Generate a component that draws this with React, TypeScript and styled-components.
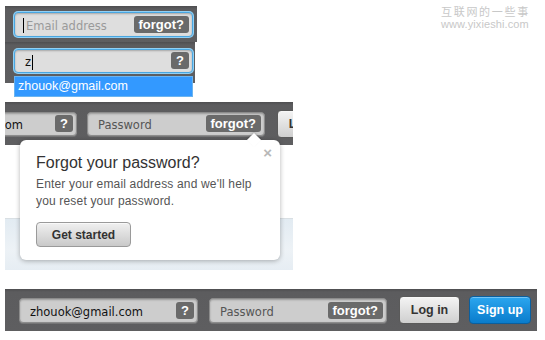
import React from 'react';
import styled, { createGlobalStyle } from 'styled-components';

const Global = createGlobalStyle`
  html, body { margin: 0; padding: 0; background: #fff; }
  body { width: 545px; height: 340px; overflow: hidden; font-family: "Liberation Sans", Arial, sans-serif; }
`;

const Canvas = styled.div`
  position: relative;
  width: 545px;
  height: 340px;
  overflow: hidden;
  background: #fff;
`;

/* each screenshot clip sits on a free canvas */
const Shot = styled.div<{ $x: number; $y: number; $w: number; $h?: number }>`
  position: absolute;
  left: ${p => p.$x}px;
  top: ${p => p.$y}px;
  width: ${p => p.$w}px;
  ${p => (p.$h ? `height: ${p.$h}px;` : '')}
  overflow: visible;
`;

const Bar = styled.div<{ $h: number; $pl: number; $gap?: number; $pt?: number }>`
  display: flex;
  align-items: center;
  box-sizing: border-box;
  height: ${p => p.$h}px;
  padding-left: ${p => p.$pl}px;
  padding-top: ${p => p.$pt ?? 0}px;
  gap: ${p => p.$gap ?? 0}px;
  overflow: hidden;
  background: linear-gradient(#4e4e50 0px, #5c5c5e 3px, #5e5e60 100%);
`;

const Field = styled.div<{ $w: number; $focus?: boolean; $h?: number; $shift?: number }>`
  flex: none;
  display: flex;
  align-items: center;
  box-sizing: border-box;
  width: ${p => p.$w}px;
  height: ${p => p.$h ?? 25}px;
  margin-left: ${p => p.$shift ?? 0}px;
  padding: 0 3px 0 10px;
  border-radius: 4px;
  background: ${p => (p.$focus ? '#dedede' : '#cdcdcd')};
  border: 1px solid ${p => (p.$focus ? '#4aa6e0' : '#8c8c8c')};
  box-shadow: ${p =>
    p.$focus
      ? '0 0 0 1px #8fd0f6, inset 0 1px 2px rgba(0,0,0,0.25)'
      : 'inset 0 1px 2px rgba(0,0,0,0.25), 0 1px 0 rgba(255,255,255,0.15)'};
`;

const FieldText = styled.span<{ $tone: 'placeholder' | 'value' | 'muted' }>`
  flex: 1;
  padding-top: 3px;
  font-family: "DejaVu Sans", Verdana, sans-serif;
  font-size: 11.5px;
  white-space: nowrap;
  color: ${p => (p.$tone === 'placeholder' ? '#9a9a9a' : p.$tone === 'muted' ? '#555' : '#111')};
  display: flex;
  align-items: center;
`;

const Caret = styled.span<{ $after?: boolean }>`
  display: inline-block;
  width: 1px;
  height: 15px;
  background: #000;
  margin: ${p => (p.$after ? '0 0 0 1px' : '0 2px 0 -2px')};
`;

const Badge = styled.span<{ $square?: boolean }>`
  flex: none;
  box-sizing: border-box;
  height: 17px;
  line-height: 17px;
  ${p => (p.$square ? 'width: 18px; text-align: center;' : 'padding: 0 5px;')}
  border-radius: 3px;
  background: #6a6a6a;
  color: #fff;
  font-family: "Liberation Sans", Arial, sans-serif;
  font-weight: bold;
  font-size: 13px;
`;

const Dropdown = styled.div`
  position: absolute;
  left: 9px;
  top: 34px;
  width: 179px;
  height: 21px;
  box-sizing: border-box;
  background: #3399ff;
  border: 1px solid #6ab4f0;
  color: #fff;
  font-family: "Liberation Sans", Arial, sans-serif;
  font-size: 12.5px;
  line-height: 19px;
  padding-left: 3px;
`;

const Button = styled.button<{ $primary?: boolean; $w: number; $ml?: number }>`
  flex: none;
  box-sizing: border-box;
  width: ${p => p.$w}px;
  height: 28px;
  margin-left: ${p => p.$ml ?? 0}px;
  border-radius: 4px;
  padding: 0;
  font-family: "Liberation Sans", Arial, sans-serif;
  font-size: 12.5px;
  font-weight: bold;
  color: ${p => (p.$primary ? '#fff' : '#333')};
  border: 1px solid ${p => (p.$primary ? '#0b5f9e' : '#5a5a5a')};
  background: ${p =>
    p.$primary
      ? 'linear-gradient(#2ba6ef, #0a7ccc)'
      : 'linear-gradient(#f4f4f4, #cfcfcf)'};
  box-shadow: inset 0 1px 0 rgba(255,255,255,0.35);
`;

const Body = styled.div`
  display: flex;
  flex-direction: column;
  height: 125px;
  background: #fff;
`;

const Spacer = styled.div`
  flex: none;
  height: 73px;
  border-bottom: 1px solid #d9dfe3;
`;

const Sky = styled.div`
  flex: 1;
  background: linear-gradient(#e2ebf2, #edf2f6 60%, #e6edf3);
`;

const Popover = styled.div`
  position: absolute;
  left: 15px;
  top: 38px;
  width: 260px;
  height: 120px;
  box-sizing: border-box;
  padding: 13px 16px 0 16px;
  background: #fff;
  border-radius: 6px;
  box-shadow: 0 1px 5px rgba(0,0,0,0.3);
  &::before {
    content: '';
    position: absolute;
    top: -5px;
    left: 229px;
    width: 10px;
    height: 10px;
    background: #fff;
    transform: rotate(45deg);
    box-shadow: -1px -1px 2px rgba(0,0,0,0.15);
  }
`;

const Close = styled.span`
  position: absolute;
  right: 8px;
  top: 4px;
  color: #b8b8b8;
  font-family: "Liberation Sans", Arial, sans-serif;
  font-size: 15px;
  font-weight: bold;
`;

const Title = styled.div`
  position: relative;
  font-size: 16px;
  color: #333;
  line-height: 20px;
`;

const Copy = styled.p`
  margin: 3px 0 0;
  font-size: 12px;
  letter-spacing: 0.17px;
  line-height: 17px;
  color: #555;
`;

const SmallButton = styled.button`
  margin-top: 12px;
  box-sizing: border-box;
  width: 95px;
  height: 25px;
  padding: 0;
  border-radius: 4px;
  border: 1px solid #9a9a9a;
  background: linear-gradient(#f0f0f0, #c9c9c9);
  box-shadow: inset 0 1px 0 rgba(255,255,255,0.6);
  font-family: "Liberation Sans", Arial, sans-serif;
  font-weight: bold;
  font-size: 12px;
  color: #333;
`;

const Watermark = styled.div`
  position: absolute;
  left: 441px;
  top: 4px;
  color: #c8c8c8;
`;

const WmCn = styled.div`
  font-family: "Noto Sans CJK SC", sans-serif;
  font-size: 11px;
  line-height: 14px;
  letter-spacing: 1.7px;
`;

const WmEn = styled.div`
  font-family: "Liberation Sans", Arial, sans-serif;
  font-size: 11px;
  line-height: 12px;
  letter-spacing: 0.1px;
`;

export default function App() {
  return (
    <Canvas>
      <Global />

      <Shot $x={5} $y={6} $w={192}>
        <Bar $h={36} $pl={9}>
          <Field $w={179} $focus>
            <FieldText $tone="placeholder">
              <Caret />
              Email address
            </FieldText>
            <Badge>forgot?</Badge>
          </Field>
        </Bar>
      </Shot>

      <Shot $x={5} $y={42} $w={190}>
        <Bar $h={41} $pl={9}>
          <Field $w={179} $focus $h={24} style={{ marginBottom: 4 }}>
            <FieldText $tone="value">
              z<Caret $after />
            </FieldText>
            <Badge $square>?</Badge>
          </Field>
        </Bar>
        <Dropdown>zhouok@gmail.com</Dropdown>
      </Shot>

      <Shot $x={5} $y={102} $w={288} $h={168}>
        <Bar $h={43} $pl={0} $gap={10}>
          <Field $w={178} $shift={-106} $h={24}>
            <FieldText $tone="value">zhouok@gmail.com</FieldText>
            <Badge $square>?</Badge>
          </Field>
          <Field $w={178} $h={24}>
            <FieldText $tone="muted">Password</FieldText>
            <Badge>forgot?</Badge>
          </Field>
          <Button $w={61} $ml={2}>Log in</Button>
        </Bar>
        <Body>
          <Spacer />
          <Sky />
        </Body>
        <Popover>
          <Close>×</Close>
          <Title>Forgot your password?</Title>
          <Copy>
            Enter your email address and we'll help
            <br />
            you reset your password.
          </Copy>
          <SmallButton>Get started</SmallButton>
        </Popover>
      </Shot>

      <Shot $x={5} $y={289} $w={532}>
        <Bar $h={42} $pl={14} $gap={11}>
          <Field $w={179}>
            <FieldText $tone="value">zhouok@gmail.com</FieldText>
            <Badge $square>?</Badge>
          </Field>
          <Field $w={178}>
            <FieldText $tone="muted">Password</FieldText>
            <Badge>forgot?</Badge>
          </Field>
          <Button $w={61} $ml={1}>Log in</Button>
          <Button $w={62} $ml={-2} $primary>Sign up</Button>
        </Bar>
      </Shot>

      <Watermark>
        <WmCn>互联网的一些事</WmCn>
        <WmEn>www.yixieshi.com</WmEn>
      </Watermark>
    </Canvas>
  );
}
